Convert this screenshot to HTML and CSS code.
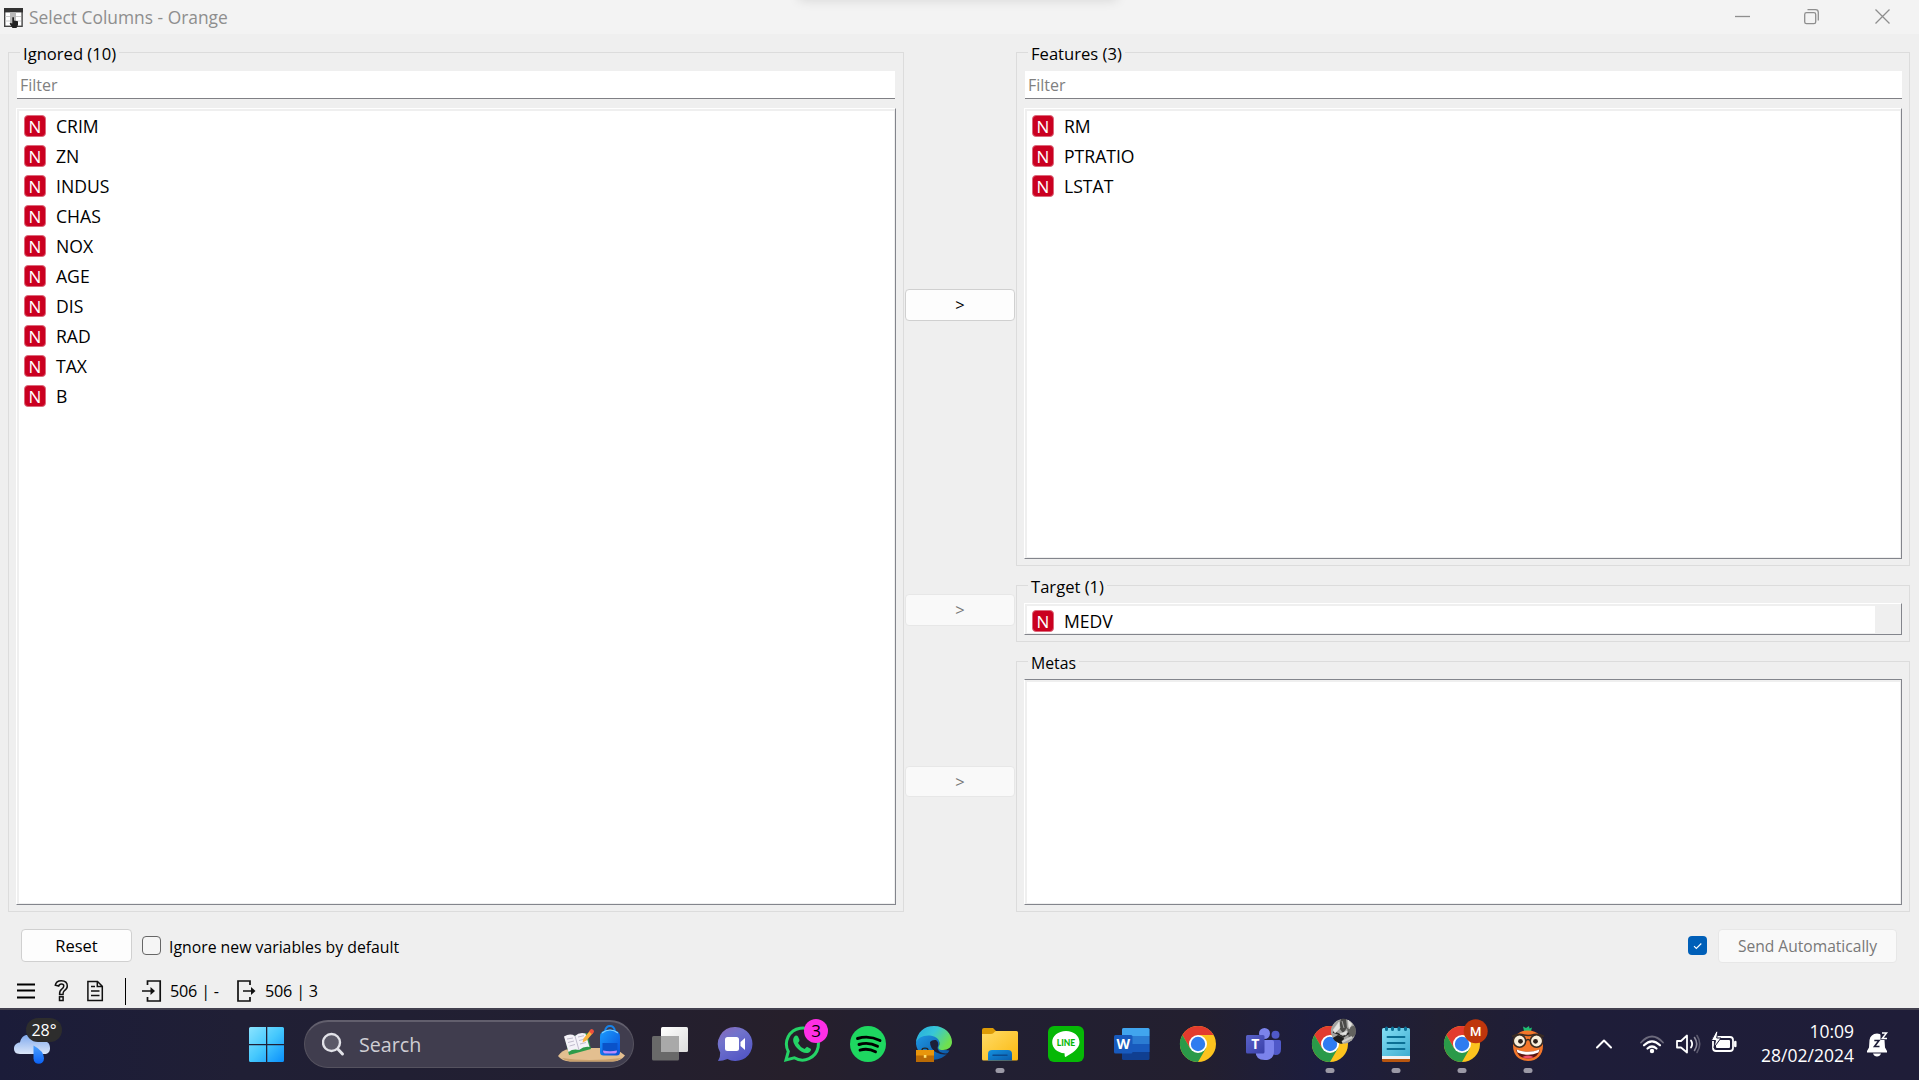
FILE: index.html
```
<!DOCTYPE html>
<html lang="en">
<head>
<meta charset="utf-8">
<title>Select Columns - Orange</title>
<link rel="stylesheet" href="styles.css">
</head>
<body>
<svg width="0" height="0" class="defs">
  <defs>
    <linearGradient id="win" x1="0" y1="0" x2="1" y2="1"><stop offset="0" stop-color="#8be4ff"/><stop offset=".5" stop-color="#45c8fd"/><stop offset="1" stop-color="#0a8ffb"/></linearGradient>
    <linearGradient id="cloud" x1="0" y1="0" x2="0" y2="1"><stop offset="0" stop-color="#7fa9ee"/><stop offset="1" stop-color="#dbe6f8"/></linearGradient>
    <linearGradient id="drop" x1="0" y1="0" x2="0" y2="1"><stop offset="0" stop-color="#4aa0ff"/><stop offset="1" stop-color="#0b62f5"/></linearGradient>
    <linearGradient id="chat" x1="0" y1="0" x2=".6" y2="1"><stop offset="0" stop-color="#8a68b8"/><stop offset=".4" stop-color="#7173cc"/><stop offset="1" stop-color="#5457c6"/></linearGradient>
    <linearGradient id="edgeA" x1="0" y1="0" x2="1" y2=".5"><stop offset="0" stop-color="#25a9e0"/><stop offset=".5" stop-color="#37c6d8"/><stop offset="1" stop-color="#6fe04e"/></linearGradient>
    <linearGradient id="edgeB" x1="0" y1="0" x2="1" y2="1"><stop offset="0" stop-color="#1f9be8"/><stop offset="1" stop-color="#0b4f9c"/></linearGradient>
    <linearGradient id="folder" x1="0" y1="0" x2="1" y2="1"><stop offset="0" stop-color="#ffdb67"/><stop offset="1" stop-color="#fbb90f"/></linearGradient>
    <linearGradient id="folderBlue" x1="0" y1="0" x2="1" y2="1"><stop offset="0" stop-color="#1492e0"/><stop offset="1" stop-color="#0a5cab"/></linearGradient>
    <linearGradient id="note" x1="0" y1="0" x2="1" y2="1"><stop offset="0" stop-color="#84dff5"/><stop offset="1" stop-color="#3fadd0"/></linearGradient>
    <linearGradient id="gray" x1="0" y1="0" x2="1" y2="1"><stop offset="0" stop-color="#ffffff"/><stop offset="1" stop-color="#dcdcdc"/></linearGradient>
    <linearGradient id="bag" x1="0" y1="0" x2="1" y2="1"><stop offset="0" stop-color="#1b9dff"/><stop offset="1" stop-color="#0a4fd8"/></linearGradient>
    <linearGradient id="teams" x1="0" y1="0" x2="1" y2="1"><stop offset="0" stop-color="#5a62c9"/><stop offset="1" stop-color="#3940a8"/></linearGradient>
    <clipPath id="avatar"><circle cx="46.300" cy="23.300" r="12.500"/></clipPath>
    <g id="chrome">
      <circle cx="33" cy="36" r="18" fill="#fcc31e"/>
      <path d="M33 36V27H48.6A18 18 0 0 0 17.4 27L25.2 40.5Z" fill="#e33b2e"/>
      <path d="M17.4 27A18 18 0 0 0 33 54L40.8 40.5L33 36L25.2 40.5Z" fill="#2a9a49"/>
      <circle cx="33" cy="36" r="9" fill="#fff"/>
      <circle cx="33" cy="36" r="7.2" fill="#2f7cf0"/>
    </g>
    <rect id="dot" x="28.5" y="60" width="9" height="5" rx="2.5" fill="#9b99a6"/>
  </defs>
</svg>

<header class="titlebar">
  <svg class="app-icon" width="19" height="20" viewBox="0 0 19 20">
    <rect x=".7" y=".7" width="17.4" height="17.6" fill="#fff" stroke="#444" stroke-width="1.4"/>
    <rect x="0" y="0" width="19" height="4.4" fill="#333"/>
    <rect x="6" y="4.400" width="6" height="13" fill="#b9b9b9"/>
    <path d="M1.500 8.500H6M1.500 13H6M12 8.500H17M12 13H17" stroke="#ccc"/>
    <path d="M8.300 9.500Q9.300 8.500 10 9.800V12.500L14 13.300V17L12.500 20H8.500L5.600 15.600Q6 14.300 8.300 15.600Z" fill="#222"/>
  </svg>
  <span class="title">Select Columns - Orange</span>
  <span class="drag-shadow"></span>
  <svg class="win-controls" width="160" height="20" viewBox="0 0 160 20" fill="none" stroke="#8e8e8e" stroke-width="1.300">
    <path d="M0 9.500H15"/>
    <rect x="69.700" y="5.700" width="11" height="11" rx="1.800"/>
    <path d="M72.500 2.700H80.500Q83.300 2.700 83.300 5.500V13.500"/>
    <path d="M140.500 2.500L154.500 16.500M154.500 2.500L140.500 16.500"/>
  </svg>
</header>

<main class="workspace">
  <section class="group ignored">
    <h2 class="group-title ignored-title">Ignored (10)</h2>
    <div class="filter">Filter</div>
    <div class="list"><ul class="items">
      <li><i class="num">N</i>CRIM</li>
      <li><i class="num">N</i>ZN</li>
      <li><i class="num">N</i>INDUS</li>
      <li><i class="num">N</i>CHAS</li>
      <li><i class="num">N</i>NOX</li>
      <li><i class="num">N</i>AGE</li>
      <li><i class="num">N</i>DIS</li>
      <li><i class="num">N</i>RAD</li>
      <li><i class="num">N</i>TAX</li>
      <li><i class="num">N</i>B</li>
    </ul></div>
  </section>

  <div class="movers">
    <button class="btn move-feature">&gt;</button>
    <button class="btn disabled move-target">&gt;</button>
    <button class="btn disabled move-meta">&gt;</button>
  </div>

  <div class="right">
    <section class="group features">
      <h2 class="group-title features-title">Features (3)</h2>
      <div class="filter">Filter</div>
      <div class="list"><ul class="items">
        <li><i class="num">N</i>RM</li>
        <li><i class="num">N</i>PTRATIO</li>
        <li><i class="num">N</i>LSTAT</li>
      </ul></div>
    </section>
    <section class="group target">
      <h2 class="group-title target-title">Target (1)</h2>
      <div class="list"><ul class="items">
        <li><i class="num">N</i>MEDV</li>
      </ul></div>
    </section>
    <section class="group metas">
      <h2 class="group-title metas-title">Metas</h2>
      <div class="list"><ul class="items"></ul></div>
    </section>
  </div>
</main>

<div class="actions">
  <button class="btn reset">Reset</button>
  <span class="check"></span>
  <span class="check-label">Ignore new variables by default</span>
  <span class="check checked"><svg width="19" height="19" viewBox="0 0 19 19"><path d="M6 10.200L8.300 12.500L13.300 7.500" fill="none" stroke="#fff" stroke-width="1.100"/></svg></span>
  <button class="btn disabled send">Send Automatically</button>
</div>

<div class="status">
  <svg width="19" height="28" viewBox="0 0 19 28"><path d="M0 7.500H18M0 13.500H18M0 20.500H18" stroke="#000" stroke-width="2.200"/></svg>
  <svg class="help" width="16" height="28" viewBox="0 0 16 28" fill="none" stroke="#111" stroke-width="1.500"><path d="M1.300 8.200Q2 3.700 7.300 3.700Q13.300 3.700 13.300 9Q13.300 12 10.200 13.800Q9 14.700 9 17.500H5.600Q5.400 13.800 7.500 12.300Q9.800 10.800 9.800 9Q9.800 6.900 7.400 6.900Q5.200 6.900 4.700 9Z"/><rect x="5.500" y="19.800" width="3.600" height="3.700"/></svg>
  <svg class="report" width="18" height="28" viewBox="0 0 18 28" fill="none" stroke="#111" stroke-width="1.500"><path d="M.9 4.500H10.500L15.300 9.300V23.500H.9ZM10.300 4.500V9.500H15.300"/><path d="M4 9.500H8M4 14H12.500M4 18.500H12.500" stroke-width="1.600"/></svg>
  <span class="divider"></span>
  <svg class="input" width="20" height="28" viewBox="0 0 20 28" fill="none" stroke="#111" stroke-width="1.700"><path d="M5.500 8V4H18.200V24H5.500V20M0 14H12"/><path d="M8.500 10L13 14L8.500 18Z" fill="#111" stroke="none"/></svg>
  <span class="count count-in">506 | -</span>
  <svg class="output" width="20" height="28" viewBox="0 0 20 28" fill="none" stroke="#111" stroke-width="1.700"><path d="M13 8V4H1V24H13V20M6 14H17"/><path d="M14 10L18.500 14L14 18Z" fill="#111" stroke="none"/></svg>
  <span class="count">506 | 3</span>
</div>

<footer class="taskbar">
  <div class="weather">
    <svg width="40" height="40" viewBox="0 0 40 40">
      <path d="M6 23C1 23 0 20 0 17.500C0 14 3 11.500 6 11.500C7 6 11 3 16 4C21 2 28 5 29 10C34 10 36 13 36 17C36 21 34 23 30 23Z" fill="url(#cloud)"/>
      <path d="M19.500 14.500Q30 20 30 27.500A5.200 5.200 0 0 1 19.500 27.500Z" fill="url(#drop)"/>
    </svg>
    <span class="temp">28°</span>
  </div>
  <svg class="start" width="36" height="36" viewBox="0 0 36 36"><path d="M1.500 0H17V17H0V1.500Q0 0 1.500 0ZM18.300 0H33.500Q35 0 35 1.500V17H18.300ZM0 18.300H17V35H1.500Q0 35 0 33.500ZM18.300 18.300H35V33.500Q35 35 33.500 35H18.300Z" fill="url(#win)"/></svg>
  <div class="search">
    <svg width="24" height="26" viewBox="0 0 24 26" fill="none" stroke="#e2e2e8" stroke-width="2.400"><circle cx="9.500" cy="10.500" r="8.500" fill="#5b5968"/><path d="M15.800 17L20.500 22" stroke-width="3" stroke-linecap="round"/></svg>
    <span class="search-text">Search</span>
    <svg class="search-art" width="70" height="40" viewBox="0 0 70 40">
      <path d="M1 32Q5 26 12 25L33 24L58 24L68 31.500Q64 37 56 37.500H13Q5 37 1 32Z" fill="#e3bf90"/>
      <path d="M5 34Q30 38 65 34Q60 37.500 55 37.500H13Q8 37 5 34Z" fill="#c9a06d"/>
      <path d="M8 14L30 9L34 25L12 31Z" fill="#2e9b4a"/>
      <path d="M7 12.500Q13 9 18 12Q22 8 28.500 9.500L32.500 23Q27 22 22 26Q16 24.500 11.500 28Z" fill="#f4f2f8"/>
      <path d="M18 12L22 26M10 15L16 14M11 18.500L17 17M12.500 22L18 20.500M21 13L27 11.700M22 16.500L28 15M23 20L29 18.500" stroke="#b9b4c6" stroke-width=".9"/>
      <path d="M25.500 18.500L26.500 14.500L33 6.500L36 9L29.500 16.500Z" fill="#f9b23c"/><path d="M32 7.500L34 5Q37 5 37 8L35 10.300Z" fill="#f0503c"/>
      <path d="M48 7Q49 2 53 2Q57 2 58 7" fill="none" stroke="#1683ea" stroke-width="2"/>
      <path d="M43 13Q43 5.500 53 5.500Q63 5.500 63 13V28Q63 31.500 59.500 31.500H46.500Q43 31.500 43 28Z" fill="url(#bag)"/>
      <path d="M45 9Q53 3 61 9" fill="none" stroke="#7fd0ff" stroke-width="1.200"/>
      <path d="M45.500 19H60.500V27Q60.500 29.500 58 29.500H48Q45.500 29.500 45.500 27Z" fill="#0a52c9"/>
      <path d="M46 26.500Q53 28 60 26.500Q60 29.500 58 29.500H48Q46 29.500 46 26.500Z" fill="#b98cff"/>
    </svg>
  </div>

  <div class="apps">
    <svg viewBox="0 0 66 72"><rect x="15" y="28" width="27" height="24.500" rx="1.500" fill="#696969"/><rect x="24" y="19" width="27" height="25" rx="1.500" fill="url(#gray)"/><path d="M24 28H42V44H24Z" fill="#a9a9a9"/></svg>
    <svg viewBox="0 0 66 72"><path d="M32.500 19A17 17 0 1 1 24.500 51Q20 53 15 53Q17.500 49 17.200 44.500A17 17 0 0 1 32.500 19Z" fill="url(#chat)"/><rect x="22" y="29" width="14" height="14" rx="2.500" fill="#fff"/><path d="M37.500 34L42 30V42L37.500 38Z" fill="#fff"/></svg>
    <svg viewBox="0 0 66 72"><path d="M17 52L19.300 43.500A16 16 0 1 1 25.300 49.800Z" fill="none" stroke="#25d366" stroke-width="3"/><path d="M25 29Q27 26.500 29 28.500L30.500 32Q30.500 33.500 29 35Q31 39 35.500 41L38 38.800L42 41Q42 44 38.500 45Q33 45.500 28 40Q23.500 35 24.200 31Z" fill="#25d366"/><circle cx="47" cy="23" r="12" fill="#ff2fe6"/><text x="47" y="29" text-anchor="middle" class="badge-num">3</text></svg>
    <svg viewBox="0 0 66 72"><circle cx="33" cy="36" r="18" fill="#1ed760"/><path d="M22.500 30.500Q34 27 45 32.500M24 36.500Q33.500 33.500 42.500 38.300M25 42.200Q33 39.800 40.500 43.800" fill="none" stroke="#000" stroke-width="2.900" stroke-linecap="round"/></svg>
    <svg viewBox="0 0 66 72"><path d="M15 36C15 25 23 24 29 25C37 26.500 39 31 38 36C37 41 42 42 48.500 42.500A18 18 0 0 1 15 36Z" fill="url(#edgeB)"/><path d="M15 35C16 24 23 18 33 18C44 18 51 26 51 34C51 39 47 42 42 42C38 42 36.500 40.500 38 38C40 33 36 28 29 27.500C22 27 16 30 15 35Z" fill="url(#edgeA)"/><path d="M29 34Q31 31.500 35 32Q38 34 37 38Q35.500 41 39 44Q44 46.500 49 44.500L48 46Q41 47.500 35.500 44.500Q29 41 29 34Z" fill="#1d2038"/><rect x="15" y="42" width="18" height="12" fill="#b96a05"/><rect x="15" y="42" width="18" height="5.500" fill="#e8960c"/><path d="M21 42Q21 40.200 24 40.200Q27 40.200 27 42" stroke="#252525" fill="none" stroke-width="1.300"/><rect x="22.800" y="47" width="2.600" height="2.800" fill="#ffe06b"/></svg>
    <svg viewBox="0 0 66 72"><path d="M15 22Q15 20 17 20H26L30 24V30H15Z" fill="#dd9b06"/><path d="M15 26H24Q26 26 28 23.500L29 23H49.500Q51 23 51 24.500V51Q51 52.500 49.500 52.500H16.500Q15 52.500 15 51Z" fill="url(#folder)"/><path d="M21 52.500V46Q21 42 25 42H41Q45 42 45 46V52.500Z" fill="url(#folderBlue)"/><path d="M26 47.200H40" stroke="#0b4b8e" stroke-width="1.500" stroke-linecap="round"/><use href="#dot"/></svg>
    <svg viewBox="0 0 66 72"><rect x="15" y="18" width="36" height="36" rx="6" fill="#06b806"/><path d="M33 23C41 23 46.500 28 46.500 34.200C46.500 41 39 45 32.500 49C31.500 49.300 31.800 47 31.500 45.300C24 44.500 19.200 40 19.200 34.200C19.200 28 25 23 33 23Z" fill="#fff"/><text x="33" y="37.700" text-anchor="middle" class="line-word">LINE</text></svg>
    <svg viewBox="0 0 66 72"><rect x="23" y="20" width="27.500" height="32" rx="1.500" fill="#103f91"/><path d="M23 21.500Q23 20 24.500 20H49Q50.500 20 50.500 21.500V28H23Z" fill="#41a5ee"/><rect x="23" y="28" width="27.500" height="8" fill="#2b7cd3"/><rect x="23" y="36" width="27.500" height="8" fill="#185abd"/><rect x="15" y="27" width="18.500" height="18.500" rx="1.500" fill="#185abd"/><text x="24.200" y="41.300" text-anchor="middle" class="tile-letter">W</text></svg>
    <svg viewBox="0 0 66 72"><use href="#chrome"/></svg>
    <svg viewBox="0 0 66 72"><circle cx="44.500" cy="26.700" r="4" fill="#5059c9"/><path d="M38 32H48.500Q50 32 50 33.500V41Q50 47 44.500 47Q40 47 38 43Z" fill="#5059c9"/><circle cx="33.500" cy="25.500" r="5.500" fill="#7b83eb"/><path d="M24.500 32H41Q43 32 43 34V43Q43 52 33.800 52Q24.500 52 24.500 43Z" fill="#7b83eb"/><rect x="15" y="27" width="18.500" height="18.500" rx="1.500" fill="url(#teams)"/><text x="24.200" y="41.300" text-anchor="middle" class="tile-letter">T</text></svg>
    <svg viewBox="0 0 66 72"><use href="#chrome"/><g clip-path="url(#avatar)"><circle cx="46.300" cy="23.300" r="12.500" fill="#a3a3a0"/><path d="M44 10H49L50 20L46 25L42 20Z" fill="#4a4a48"/><path d="M34 31L41 27L47 30L45 37H34Z" fill="#1e1e1d"/><path d="M50 20L59 17V27L52 31Z" fill="#62625f"/><path d="M36 24Q41 25 46 29L52 25" stroke="#2c2c2b" stroke-width="1.600" fill="none"/><path d="M36 22L42 14L43 20L38 25ZM45 13L47 20M51 12L55 16L52 21ZM43 26L50 23L49 27Z" fill="#e4e4e1" stroke="#dededb" stroke-width=".6"/><path d="M45 34L55 29" stroke="#cfcfcb" stroke-width="2"/></g><use href="#dot"/></svg>
    <svg viewBox="0 0 66 72"><path d="M19 47H47V52.500Q47 54 45.500 54H20.500Q19 54 19 52.500Z" fill="#b9560f"/><rect x="19" y="46" width="28" height="5" fill="#f1f1f1"/><path d="M19 21.500Q19 20 20.500 20H45.500Q47 20 47 21.500V48H19Z" fill="url(#note)"/><path d="M24.500 29H41.500M24.500 35H41.500M24.500 41H41.500" stroke="#0b6f94" stroke-width="1.900" stroke-linecap="round"/><path d="M23.500 20V21.500M29.500 20V21.500M36 20V21.500M42.500 20V21.500" stroke="#0b6f94" stroke-width="3" stroke-linecap="round"/><use href="#dot"/></svg>
    <svg viewBox="0 0 66 72"><use href="#chrome"/><circle cx="46.700" cy="23.200" r="12" fill="#bf360c"/><text x="46.700" y="28" text-anchor="middle" class="profile">M</text><use href="#dot"/></svg>
    <svg viewBox="0 0 66 72"><path d="M29 23L28 18.500L31 20L34 18L34.500 20.500L37 19.500L36 23Z" fill="#1fbf73"/><path d="M33 22.500C43 22.500 48 29 48 37.500C48 47 42 53 33 53C24 53 18 47 18 37.500C18 29 23 22.500 33 22.500Z" fill="#f4772a"/><circle cx="24.500" cy="33" r="6.200" fill="#f8efdc" stroke="#3b2c22" stroke-width="1.500"/><circle cx="41.500" cy="33" r="6.200" fill="#f8efdc" stroke="#3b2c22" stroke-width="1.500"/><path d="M17 28.500Q22 25.500 27 26.500Q33 28.500 39 26.500Q44 25.500 49 28.500M30.500 33Q33 30 35.500 33" fill="none" stroke="#3b2c22" stroke-width="1.500"/><circle cx="25.500" cy="33.300" r="2.400" fill="#2d211b"/><circle cx="40.500" cy="33.300" r="2.400" fill="#2d211b"/><path d="M21 41.500Q33 46 45 41.500Q43 50.500 33 50.500Q23 50.500 21 41.500Z" fill="#5b1511"/><path d="M21.500 41.500Q33 46 44.500 41.500L43.500 44.500Q33 49 22.500 44.500Z" fill="#fff"/><path d="M27 49.300Q33 45.800 39 49.300Q33 51.500 27 49.300Z" fill="#ef4f6b"/><use href="#dot"/></svg>
  </div>

  <svg class="tray" width="142" height="30" viewBox="0 0 142 30" fill="none" stroke="#fff" stroke-width="2" stroke-linecap="round" stroke-linejoin="round">
    <path d="M2 18.500L9 11.500L16 18.500"/>
    <path d="M46 13.500Q57 1.500 68 13.500" stroke="#6c6a7c" stroke-width="1.800"/>
    <path d="M49 16.300Q57 8.500 65 16.300M52.500 19.500Q57 15.500 61.500 19.500" stroke-width="2.200"/><circle cx="57" cy="22" r="2.200" fill="#fff" stroke="none"/>
    <path d="M82 12H86L92 6.500V23.500L86 18.500H82Z" stroke-width="1.800"/>
    <path d="M96 11.500Q98.300 15 96 18.500" stroke-width="1.800"/><path d="M99.500 8.500Q104 15 99.500 21.500" stroke="#8d8b9b" stroke-width="1.600"/><path d="M102 6.500Q107.500 15 102 23.500" stroke="#5b596d" stroke-width="1.600"/>
    <rect x="118" y="8" width="20" height="14" rx="3" stroke-width="1.800"/><rect x="121" y="11" width="14" height="8" rx="1" fill="#fff" stroke="none"/><path d="M140.300 13V17" stroke-width="2.500"/>
    <path d="M121 2.500L116.300 11.500H120.500L119 18.500L126 9H121.700L123 2.500Z" fill="#fff" stroke="#1e1d38" stroke-width="1"/>
  </svg>
  <div class="clock"><span class="time">10:09</span><span>28/02/2024</span></div>
  <svg class="bell" width="22" height="26" viewBox="0 0 22 26"><path d="M2.500 9Q3.500 3 10 2.500Q16 3 17.500 9L18 16.500L20 20V21.500H0V20L2 16.500ZM6 22.500H14Q13 25.500 10 25.500Q7 25.500 6 22.500Z" fill="#fff"/><path d="M13.500 1H20V9H13.500Z" fill="#1e1d38"/><path d="M15 2H19.500L15.300 7.500H20" fill="none" stroke="#fff" stroke-width="1.500"/><path d="M7.300 9.500H12L7.500 15.500H12.500" fill="none" stroke="#1e1d38" stroke-width="1.600"/></svg>
</footer>
</body>
</html>
```
FILE: styles.css
```
* { box-sizing: border-box; }

body {
  margin: 0;
  width: 1919px;
  height: 1080px;
  overflow: hidden;
  display: flex;
  flex-direction: column;
  background: #efefef;
  color: #000;
  font-family: "Open Sans", "Noto Sans", sans-serif;
  font-size: 16.5px;
}

.defs { position: absolute; }
svg { display: block; flex: none; }

/* title bar */
.titlebar {
  position: relative;
  flex: none;
  height: 34px;
  display: flex;
  align-items: center;
  padding-left: 4px;
  background: #f3f3f3;
  overflow: hidden;
}
.app-icon { margin-top: 1px; }
.title { margin-left: 6px; font-size: 17.4px; line-height: 34px; color: #8e8e8e; }
.win-controls { margin-left: auto; margin-right: 24px; }
.drag-shadow {
  position: absolute;
  left: 800px;
  top: -10px;
  width: 316px;
  height: 9px;
  box-shadow: 0 0 12px 1px rgba(0, 0, 0, .13);
}

/* groups */
.workspace { flex: none; display: flex; height: 878px; padding: 18px 9px 0 8px; }
.group {
  flex: none;
  display: flex;
  flex-direction: column;
  border: 1px solid #dcdcdc;
  padding: 0 7px 6px;
}
.ignored { width: 896px; }
.right { width: 894px; display: flex; flex-direction: column; gap: 19px; }
.features { height: 514px; }
.target { height: 57px; }
.metas { height: 251px; }

.group-title {
  flex: none;
  align-self: flex-start;
  height: 24px;
  margin: -12px 0 5px 4px;
  padding: 0 3px;
  background: #efefef;
  font-size: 16.6px;
  font-weight: 400;
  line-height: 26px;
}
.target-title { line-height: 25px; }
.metas-title { font-size: 15.8px; }

.filter {
  flex: none;
  height: 28px;
  margin: 1px 1px 9px;
  padding: 1px 0 0 3px;
  background: #fff;
  border-bottom: 1px solid #808085;
  color: #808080;
  font-size: 16px;
  line-height: 27px;
}
.features .filter { margin-right: 0; }
.list {
  flex: 1;
  min-height: 0;
  padding: 2px 1px 1px 2px;
  background: #efefef;
  border: 1px solid #83858c;
  border-top-color: #fff;
  border-left-color: #fff;
}
.items {
  height: 100%;
  margin: 0;
  padding: 0 0 0 5px;
  overflow: hidden;
  list-style: none;
  background: #fff;
}
.items li { display: flex; align-items: center; height: 30px; gap: 10px; font-size: 17.6px; }
.num {
  width: 22px;
  height: 22px;
  border: 1px solid #dc6a7c;
  border-radius: 4px;
  background: #ca0020;
  color: #fff;
  font-size: 17px;
  font-style: normal;
  line-height: 21px;
  text-align: center;
}
.target .items { margin-right: 25px; }
.metas .list { border-top-color: #83858c; }

/* buttons */
.btn {
  padding: 0;
  border: 1px solid #d0d0d0;
  border-radius: 4px;
  background: #fdfdfd;
  color: #000;
  font: inherit;
  text-align: center;
}
.btn.disabled { border-color: #e7e7e7; background: #f9f9f9; color: #787878; }
.movers { width: 112px; display: flex; flex-direction: column; align-items: flex-start; padding-left: 1px; }
.movers .btn { width: 110px; height: 32px; line-height: 28px; }
.move-feature { margin-top: 237px; }
.move-target { margin-top: 273px; }
.movers .move-meta { margin-top: 140px; height: 31px; }

/* action row */
.actions { flex: none; display: flex; align-items: center; height: 67px; padding: 0 22px 0 21px; }
.reset { width: 111px; height: 33px; }
.check { width: 19px; height: 19px; margin-left: 10px; border: 1px solid #666; border-radius: 4px; background: #f5f5f5; }
.check-label { margin-left: 8px; padding-top: 2px; font-size: 15.8px; }
.checked { margin-left: auto; border: 0; background: #005fb8; }
.send { width: 179px; height: 34px; margin-left: 11px; padding-top: 1px; font-size: 15.6px; }

/* status row */
.status { flex: none; display: flex; align-items: center; height: 29px; padding: 0 0 5px 17px; }
.status svg { margin-top: 0; }
.status .help { margin-left: 18px; }
.status .report { margin-left: 17px; }
.divider { width: 1px; height: 27px; margin: 1px 0 0 20px; background: #000; }
.status .input { margin-left: 16px; }
.status .output { margin-left: 18px; }
.count { margin: 0 0 0 8px; font-size: 16.2px; letter-spacing: -.2px; white-space: nowrap; }
.count-in { width: 49px; }

/* taskbar */
.taskbar {
  flex: none;
  display: flex;
  height: 72px;
  background: linear-gradient(90deg, #1b1c39 0, #201f35 240px, #221f31 560px, #261f2b 790px, #211f33 950px, #231f2f 1200px, #1c1d3e 1320px, #221f31 1440px, #1e1d39 1560px, #1f1d38 100%);
  box-shadow: inset 0 2px #42404f;
  color: #fff;
}
.weather { position: relative; width: 249px; padding: 23px 0 0 14px; }
.temp {
  position: absolute;
  left: 26px;
  top: 10px;
  width: 36px;
  height: 24px;
  border-radius: 12px;
  background: #2d2d2d;
  font-size: 16px;
  line-height: 25px;
  text-align: center;
}
.start { margin-top: 19px; }
.search {
  width: 330px;
  height: 48px;
  margin: 12px 3px 0 19px;
  display: flex;
  align-items: center;
  padding-left: 17px;
  border: 1px solid #55525f;
  border-top: 2px solid #625f6d;
  border-radius: 24px;
  background: #403d4e;
}
.search-text { margin-left: 13px; font-size: 19.7px; color: #cfced4; }
.search-art { margin: 0 6px 2px auto; }
.apps { display: flex; }
.apps svg { width: 66px; height: 72px; }
.badge-num { font-size: 17px; fill: #000; }
.line-word { font: 900 8.500px Lato, sans-serif; fill: #06b806; }
.tile-letter { font-size: 14px; font-weight: 700; fill: #fff; }
.profile { font: 500 13px Roboto, sans-serif; fill: #fff; }
.tray { margin: 21px 0 0 34px; }
.clock { width: 117px; padding-top: 11px; display: flex; flex-direction: column; align-items: flex-end; font-size: 17.5px; line-height: 24px; }
.bell { margin: 23px 0 0 13px; }
```
